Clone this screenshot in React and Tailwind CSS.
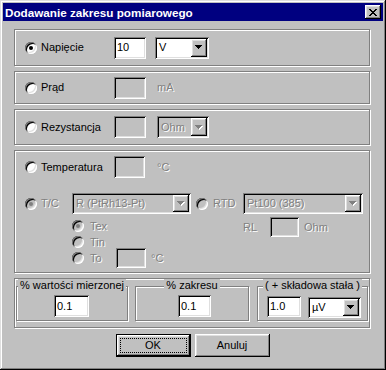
import React from "react";

const winFrame =
  "shadow-[inset_-1px_-1px_#000,inset_1px_1px_#dfdfdf,inset_-2px_-2px_#808080,inset_2px_2px_#fff]";
const sunken =
  "shadow-[inset_1px_1px_#808080,inset_-1px_-1px_#fff,inset_2px_2px_#000,inset_-2px_-2px_#dfdfdf]";
const raised =
  "shadow-[inset_-1px_-1px_#000,inset_1px_1px_#fff,inset_-2px_-2px_#808080,inset_2px_2px_#dfdfdf]";
const etched = "border border-[#808080] shadow-[1px_1px_0_#fff,inset_1px_1px_0_#fff]";
const dim = "text-[#808080] [text-shadow:1px_1px_0_#fff]";

function Radio({ checked, disabled }) {
  return (
    <span
      className={`w-[12px] h-[12px] rounded-full shrink-0 flex items-center justify-center ${sunken} ${
        disabled ? "bg-[#c0c0c0]" : "bg-white"
      }`}
    >
      {checked && (
        <span className={`w-[4px] h-[4px] rounded-full ${disabled ? "bg-[#808080]" : "bg-black"}`} />
      )}
    </span>
  );
}

function Field({ value, disabled, className }) {
  return (
    <div
      className={`flex items-center pl-[3px] shrink-0 ${sunken} ${
        disabled ? "bg-[#c0c0c0]" : "bg-white"
      } ${className}`}
    >
      {value}
    </div>
  );
}

function Arrow({ disabled }) {
  const c = disabled ? "#808080" : "#000";
  return (
    <svg width="8" height="5" viewBox="0 0 8 5" shapeRendering="crispEdges">
      {disabled && (
        <g fill="#fff">
          <rect x="1" y="1" width="7" height="1" />
          <rect x="2" y="2" width="5" height="1" />
          <rect x="3" y="3" width="3" height="1" />
          <rect x="4" y="4" width="1" height="1" />
        </g>
      )}
      <g fill={c}>
        <rect x="0" y="0" width="7" height="1" />
        <rect x="1" y="1" width="5" height="1" />
        <rect x="2" y="2" width="3" height="1" />
        <rect x="3" y="3" width="1" height="1" />
      </g>
    </svg>
  );
}

function Combo({ text, disabled, className }) {
  return (
    <div
      className={`flex p-[2px] shrink-0 ${sunken} ${disabled ? "bg-[#c0c0c0]" : "bg-white"} ${className}`}
    >
      <span className={`flex-1 flex items-center pl-[2px] whitespace-nowrap overflow-hidden ${disabled ? dim : ""}`}>
        {text}
      </span>
      <span className={`w-[16px] bg-[#c0c0c0] flex items-center justify-center ${raised}`}>
        <Arrow disabled={disabled} />
      </span>
    </div>
  );
}

function Group({ label, className, children }) {
  return (
    <div className={`relative h-[35px] shrink-0 ${etched} ${className}`}>
      <div className="absolute left-0 right-0 top-[-8px] flex justify-center">
        <span className="bg-[#c0c0c0] px-[2px] leading-[13px]">{label}</span>
      </div>
      <div className="flex">{children}</div>
    </div>
  );
}

function Button({ label, isDefault }) {
  if (isDefault) {
    return (
      <div className="w-[75px] h-[23px] border border-black">
        <div className={`w-full h-full flex items-center justify-center p-[3px] ${raised}`}>
          <div className="w-full h-full border border-dotted border-black flex items-center justify-center">
            {label}
          </div>
        </div>
      </div>
    );
  }
  return (
    <div className={`w-[75px] h-[23px] flex items-center justify-center ${raised}`}>{label}</div>
  );
}

function CloseGlyph() {
  const rows = [
    [0, 1, 6, 7],
    [1, 2, 5, 6],
    [2, 3, 4, 5],
    [3, 4],
    [2, 3, 4, 5],
    [1, 2, 5, 6],
    [0, 1, 6, 7],
  ];
  return (
    <svg width="8" height="7" viewBox="0 0 8 7" shapeRendering="crispEdges">
      {rows.map((r, y) => r.map((x) => <rect key={`${x}-${y}`} x={x} y={y} width="1" height="1" fill="#000" />))}
    </svg>
  );
}

export default function App() {
  return (
    <div
      className={`w-[386px] h-[370px] bg-[#c0c0c0] p-[3px] flex flex-col text-[11px] leading-[13px] text-black font-['Liberation_Sans',Arial,sans-serif] ${winFrame}`}
    >
      {/* title bar */}
      <div className="h-[18px] bg-[#000080] flex items-center justify-between pl-[2px] pr-[2px] shrink-0">
        <span className="text-white font-bold text-[11.7px]">Dodawanie zakresu pomiarowego</span>
        <span className={`w-[16px] h-[14px] bg-[#c0c0c0] flex items-center justify-center ${raised}`}>
          <CloseGlyph />
        </span>
      </div>

      <div className="ml-[11px] flex flex-col">
        {/* Napięcie */}
        <div className={`mt-[8px] w-[356px] h-[37px] flex items-center pl-[10px] ${etched}`}>
          <div className="w-[89px] flex items-center">
            <Radio checked />
            <span className="ml-[4px]">Napięcie</span>
          </div>
          <Field value="10" className="w-[32px] h-[22px]" />
          <Combo text="V" className="ml-[9px] w-[54px] h-[22px]" />
        </div>

        {/* Prąd */}
        <div className={`mt-[5px] w-[356px] h-[33px] flex items-center pl-[10px] ${etched}`}>
          <div className="w-[89px] flex items-center">
            <Radio />
            <span className="ml-[4px]">Prąd</span>
          </div>
          <Field disabled className="w-[32px] h-[22px]" />
          <span className={`ml-[11px] ${dim}`}>mA</span>
        </div>

        {/* Rezystancja */}
        <div className={`mt-[5px] w-[356px] h-[36px] flex items-center pl-[10px] ${etched}`}>
          <div className="w-[89px] flex items-center">
            <Radio />
            <span className="ml-[4px]">Rezystancja</span>
          </div>
          <Field disabled className="w-[32px] h-[22px]" />
          <Combo disabled text="Ohm" className="ml-[11px] w-[52px] h-[22px]" />
        </div>

        {/* Temperatura */}
        <div className={`mt-[5px] w-[356px] h-[123px] flex flex-col pl-[10px] ${etched}`}>
          <div className="mt-[5px] h-[22px] flex items-center">
            <div className="w-[89px] flex items-center">
              <Radio />
              <span className="ml-[4px]">Temperatura</span>
            </div>
            <Field disabled className="w-[31px] h-[22px]" />
            <span className={`ml-[12px] ${dim}`}>°C</span>
          </div>

          <div className="mt-[15px] h-[21px] flex items-center">
            <div className="w-[47px] flex items-center">
              <Radio checked disabled />
              <span className={`ml-[4px] ${dim}`}>T/C</span>
            </div>
            <Combo disabled text="R (PtRh13-Pt)" className="w-[119px] h-[21px]" />
            <div className="ml-[5px] w-[47px] flex items-center">
              <Radio disabled />
              <span className={`ml-[5px] ${dim}`}>RTD</span>
            </div>
            <Combo disabled text="Pt100 (385)" className="w-[120px] h-[21px]" />
          </div>

          <div className="mt-[4px] flex">
            <div className="ml-[47px] w-[171px] flex flex-col">
              <div className="h-[16px] flex items-center">
                <Radio checked disabled />
                <span className={`ml-[6px] ${dim}`}>Tex</span>
              </div>
              <div className="h-[16px] flex items-center">
                <Radio disabled />
                <span className={`ml-[6px] ${dim}`}>Tin</span>
              </div>
              <div className="h-[16px] flex items-center">
                <Radio disabled />
                <span className={`ml-[6px] w-[26px] ${dim}`}>To</span>
                <Field disabled className="w-[30px] h-[20px]" />
                <span className={`ml-[5px] ${dim}`}>°C</span>
              </div>
            </div>
            <div className="-mt-[1px] h-[20px] flex items-center">
              <span className={`w-[27px] ${dim}`}>RL</span>
              <Field disabled className="w-[29px] h-[20px]" />
              <span className={`ml-[5px] ${dim}`}>Ohm</span>
            </div>
          </div>
        </div>

        {/* tolerances */}
        <div className={`mt-[5px] w-[356px] h-[50px] flex pl-[1px] pt-[7px] ${etched}`}>
          <Group label="% wartości mierzonej" className="w-[112px]">
            <Field value="0.1" className="ml-[37px] mt-[8px] w-[35px] h-[22px]" />
          </Group>
          <Group label="% zakresu" className="ml-[7px] w-[114px]">
            <Field value="0.1" className="ml-[42px] mt-[8px] w-[33px] h-[22px]" />
          </Group>
          <Group label="( + składowa stała )" className="ml-[8px] w-[111px]">
            <Field value="1.0" className="ml-[9px] mt-[9px] w-[34px] h-[21px]" />
            <Combo text="µV" className="ml-[7px] mt-[10px] w-[53px] h-[21px]" />
          </Group>
        </div>
      </div>

      {/* buttons */}
      <div className="mt-[6px] flex justify-center gap-[4px] pr-[1px]">
        <Button label="OK" isDefault />
        <Button label="Anuluj" />
      </div>
    </div>
  );
}
